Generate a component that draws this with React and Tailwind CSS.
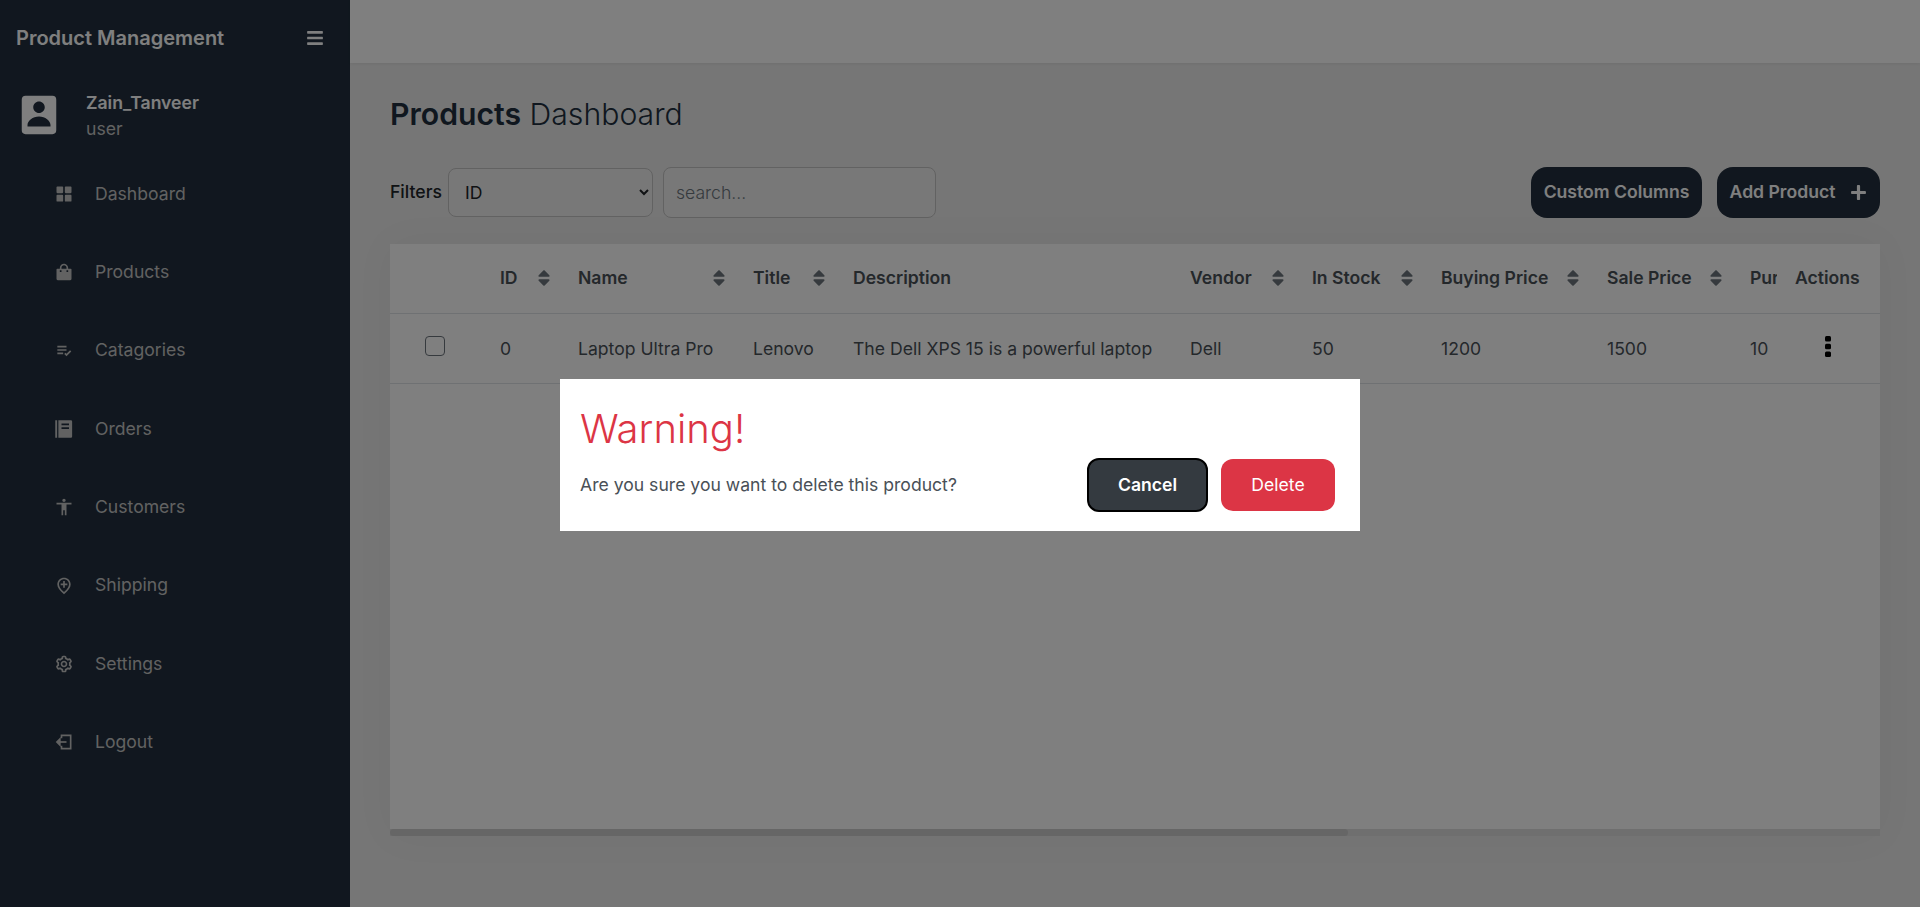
import { BiSolidGridAlt, BiSolidShoppingBag, BiListCheck, BiCog, BiSolidUserRectangle } from 'react-icons/bi'
import { MdOutlineAddLocation, MdAccessibility } from 'react-icons/md'
import { FaBars, FaPlus, FaSort } from 'react-icons/fa'

const OrdersIcon = ({ className }) => (
  <svg viewBox="0 0 16 16" className={className} fill="currentColor">
    <path d="M1 1h1.5v14H1z" />
    <path fillRule="evenodd" d="M3.5 1H13.5a1 1 0 0 1 1 1v12a1 1 0 0 1-1 1H3.5zM6 3.5V5h6V3.5zM6 6.5V8h6V6.5z" />
  </svg>
)

const LogoutIcon = ({ className }) => (
  <svg viewBox="0 0 24 24" className={className} fill="none" stroke="currentColor" strokeWidth="2">
    <path d="M9 7.5V4h11v16H9v-3.5" />
    <path d="M15 12H6" />
    <path d="M7 8.5 3.5 12 7 15.5z" fill="currentColor" />
  </svg>
)

const DotsIcon = () => (
  <svg viewBox="0 0 6 21" className="ml-[48px] -mt-[3px] h-[21px] w-[6px] fill-black">
    <rect width="6" height="5.5" rx="1.5" />
    <rect y="7.75" width="6" height="5.5" rx="1.5" />
    <rect y="15.5" width="6" height="5.5" rx="1.5" />
  </svg>
)

const navItems = [
  ['Dashboard', BiSolidGridAlt],
  ['Products', BiSolidShoppingBag],
  ['Catagories', BiListCheck],
  ['Orders', OrdersIcon],
  ['Customers', MdAccessibility],
  ['Shipping', MdOutlineAddLocation],
  ['Settings', BiCog],
  ['Logout', LogoutIcon],
]

const columns = [
  { label: '', width: 'w-[98px]', sort: false },
  { label: 'ID', width: 'w-[78px]', sort: true },
  { label: 'Name', width: 'w-[175px]', sort: true },
  { label: 'Title', width: 'w-[100px]', sort: true },
  { label: 'Description', width: 'w-[337px]', sort: false },
  { label: 'Vendor', width: 'w-[122px]', sort: true },
  { label: 'In Stock', width: 'w-[129px]', sort: true },
  { label: 'Buying Price', width: 'w-[166px]', sort: true },
  { label: 'Sale Price', width: 'w-[143px]', sort: true },
  { label: 'Purchase Price', width: 'w-[200px]', sort: true },
  { label: 'Profit', width: 'w-[666px]', sort: true },
]

const row = ['0', 'Laptop Ultra Pro', 'Lenovo', 'The Dell XPS 15 is a powerful laptop', 'Dell', '50', '1200', '1500', '10', '300']

const App = () => {
  return (
    <div className="relative flex h-[907px] w-[1920px] overflow-hidden font-['Inter',sans-serif] text-[17.6px] text-[#212529]">
      {/* Sidebar */}
      <aside className="w-[350px] shrink-0 bg-[#222f3e] text-white">
        <div className="flex h-[76px] items-center justify-between pl-4 pr-[26px]">
          <span className="text-xl font-semibold leading-none">Product Management</span>
          <FaBars className="text-[18px]" />
        </div>
        <div className="mt-1 flex h-[70px] items-center pl-[16px]">
          <BiSolidUserRectangle className="text-[46px]" />
          <div className="ml-[24px] pt-[3px]">
            <div className="font-semibold leading-6">Zain_Tanveer</div>
            <div className="leading-7 text-[#c4c4c4]">user</div>
          </div>
        </div>
        <ul className="mt-[4.5px] text-[#c4c4c4]">
          {navItems.map(([label, Icon]) => (
            <li key={label} className="flex h-[78.4px] items-center pl-[54px]">
              <Icon className="h-5 w-5" />
              <span className="ml-[21px]">{label}</span>
            </li>
          ))}
        </ul>
      </aside>

      {/* Main */}
      <main className="flex min-w-0 flex-1 flex-col bg-[#ececec]">
        <div className="h-[63px] shrink-0 bg-white shadow-[0_1px_3px_rgba(0,0,0,0.06)]" />
        <div className="flex min-h-0 flex-1 flex-col px-10">
          <h1 className="mt-[33px] text-[30.2px] font-light leading-9 text-[#212f3e]">
            <span className="font-semibold">Products</span> Dashboard
          </h1>
          <div className="mt-[35px] flex items-center justify-between">
            <div className="flex items-center">
              <span className="font-medium">Filters</span>
              <select defaultValue="ID" className="ml-[6px] h-[49px] w-[205px] rounded-lg border border-[#c4c4c4] bg-[#f0f0f0] pl-3">
                <option>ID</option>
              </select>
              <input
                placeholder="search..."
                className="ml-[10px] h-[51px] w-[273px] rounded-lg border border-[#c4c4c4] bg-[#f0f0f0] px-3 font-light placeholder:text-[#6c757d]"
              />
            </div>
            <div className="flex items-center gap-[15px]">
              <button className="h-[51px] w-[171px] rounded-2xl bg-[#222f3e] font-semibold text-white">Custom Columns</button>
              <button className="flex h-[51px] w-[163px] items-center justify-center gap-[15px] rounded-2xl bg-[#222f3e] font-semibold text-white">
                Add Product <FaPlus className="text-[17px]" />
              </button>
            </div>
          </div>

          {/* Table */}
          <div className="mt-[26px] h-[592px] shrink-0 bg-white shadow-[0_0_40px_rgba(0,0,0,0.04)]">
            <div className="relative h-[585px] overflow-hidden">
              <table className="w-[2317px] table-fixed border-collapse text-left">
                <thead>
                  <tr className="h-[69px] border-b border-[#dee2e6]">
                    {columns.map((col) => (
                      <th key={col.label} className={`${col.width} overflow-hidden whitespace-nowrap px-3 font-semibold text-[#495057]`}>
                        <div className="flex items-center justify-between">
                          {col.label}
                          {col.sort && <FaSort className="shrink-0 text-[20px] text-[#6c757d]" />}
                        </div>
                      </th>
                    ))}
                    <th className="sticky right-0 w-[103px] bg-white pl-[18px] font-semibold text-[#495057]">
                      <div className="flex items-center justify-between overflow-hidden whitespace-nowrap">
                        Actions
                        <FaSort className="ml-4 shrink-0 text-[20px] text-[#6c757d]" />
                      </div>
                    </th>
                  </tr>
                </thead>
                <tbody>
                  <tr className="h-[70px] border-b border-[#dee2e6]">
                    <td className="pl-[35px]">
                      <input type="checkbox" className="-mt-[5px] block h-5 w-5 appearance-none rounded border border-[#6c757d] bg-white" />
                    </td>
                    {row.map((cell, i) => (
                      <td key={i} className="overflow-hidden whitespace-nowrap px-3 pt-[2px] text-[#495057]">{cell}</td>
                    ))}
                    <td className="sticky right-0 bg-white">
                      <DotsIcon />
                    </td>
                  </tr>
                </tbody>
              </table>
            </div>
            <div className="h-[7px] bg-[#dedede]">
              <div className="h-full w-[958px] rounded-sm bg-[#cccccc]" />
            </div>
          </div>
        </div>
      </main>

      {/* Dimmed backdrop and delete dialog */}
      <div className="absolute inset-0 flex items-start justify-center bg-black/50 pt-[379px]">
        <div className="flex h-[152px] w-[800px] flex-col bg-white pl-5 pr-[25px]">
          <h2 className="mt-[26px] text-[40px] font-light leading-[48px] text-[#dc3545]">Warning!</h2>
          <div className="mt-[5px] flex items-center justify-between">
            <p className="text-[#495057]">Are you sure you want to delete this product?</p>
            <div className="flex items-center gap-[13px]">
              <button className="h-[54px] w-[121px] rounded-xl border-2 border-black bg-[#343a40] font-semibold text-white">Cancel</button>
              <button className="h-[52px] w-[114px] rounded-xl bg-[#dc3545] text-white">Delete</button>
            </div>
          </div>
        </div>
      </div>
    </div>
  )
}

export default App
